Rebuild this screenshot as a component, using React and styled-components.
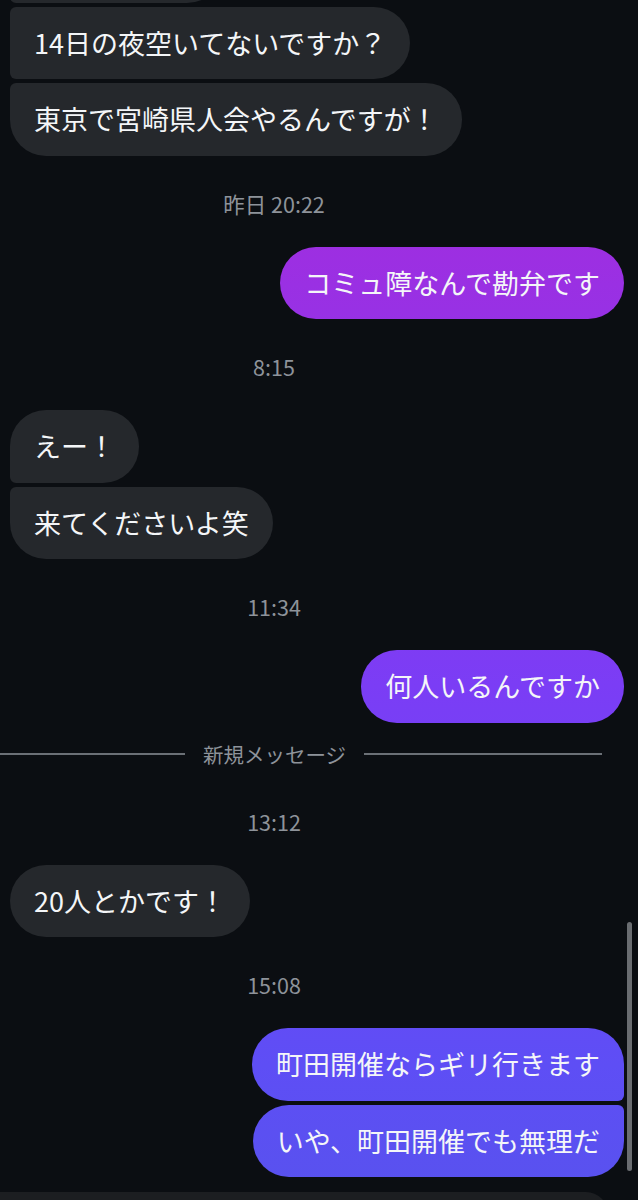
import styled, { createGlobalStyle, css } from 'styled-components';

//Styles
const GlobalStyle = createGlobalStyle`
body {
  margin: 0;
  background: #0b0e12;
  overflow: hidden;
}
`
const Screen = styled.div`
position: relative;
height: 1200px;
overflow: hidden;
display: flex;
flex-direction: column;
background: #0b0e12;
font-family: "Noto Sans CJK JP", "Noto Sans", sans-serif;
`
const Thread = styled.div`
display: flex;
flex-direction: column;
padding: 0 14px 0 10px;
margin-top: -70px;
`
const Group = styled.div`
display: flex;
flex-direction: column;
gap: 4px;
align-items: ${p => (p.$mine ? 'flex-end' : 'flex-start')};
`
const BIG = 36
const SMALL = 6
const corners = (pos) => {
  const top = pos === 'single' || pos === 'first' ? BIG : SMALL
  const bottom = pos === 'single' || pos === 'last' ? BIG : SMALL
  return [top, bottom]
}
const Bubble = styled.div`
box-sizing: border-box;
padding: 18px 24px;
font-size: 27px;
line-height: 36.5px;
color: #f4f6f8;
white-space: nowrap;
${p => p.$w && `width: ${p.$w}px;`}
${p => {
    const [top, bottom] = corners(p.$pos)
    return p.$mine
      ? css`
        border-radius: ${BIG}px ${top}px ${bottom}px ${BIG}px;
        background: linear-gradient(180deg, #b027d6 0px, #9a30e3 284px, #7b3df5 685px, #5e4ef5 1065px, #5852ee 1200px);
        background-attachment: fixed;
      `
      : css`
        border-radius: ${top}px ${BIG}px ${BIG}px ${bottom}px;
        background: #25282c;
      `
  }}
`
const Stamp = styled.div`
margin: 36px 0 31px;
padding-right: 86px;
text-align: center;
font-size: 21.5px;
line-height: 24px;
color: #8e939a;
`
const Divider = styled.div`
display: flex;
align-items: center;
margin: 19px -14px 8px -10px;
padding-right: 36px;
font-size: 20.5px;
line-height: 24px;
color: #8e939a;
`
const Rule = styled.div`
height: 2px;
background: #6b7076;
${p => (p.$fill ? 'flex: 1;' : `width: ${p.$w}px;`)}
`
const DividerLabel = styled.span`
padding: 0 18px;
white-space: nowrap;
`
const Composer = styled.div`
margin-top: 15px;
margin-right: 30px;
height: 64px;
flex-shrink: 0;
background: #1c1e21;
border-radius: 0 22px 0 0;
`
const Scrollbar = styled.div`
position: absolute;
left: 627px;
top: 922px;
width: 5px;
height: 249px;
border-radius: 3px;
background: #6a6d71;
`

// first bubble is scrolled off the top, only its bottom edge shows
const thread = [
  { type: 'group', mine: false, items: [{ text: '\u00a0', w: 213 }, '14日の夜空いてないですか？', '東京で宮崎県人会やるんですが！'] },
  { type: 'stamp', text: '昨日 20:22' },
  { type: 'group', mine: true, items: ['コミュ障なんで勘弁です'] },
  { type: 'stamp', text: '8:15' },
  { type: 'group', mine: false, items: ['えー！', '来てくださいよ笑'] },
  { type: 'stamp', text: '11:34' },
  { type: 'group', mine: true, items: ['何人いるんですか'] },
  { type: 'divider', text: '新規メッセージ' },
  { type: 'stamp', text: '13:12' },
  { type: 'group', mine: false, items: ['20人とかです！'] },
  { type: 'stamp', text: '15:08' },
  { type: 'group', mine: true, items: ['町田開催ならギリ行きます', 'いや、町田開催でも無理だ'] },
]

const position = (i, n) => {
  if (n === 1) return 'single'
  if (i === 0) return 'first'
  if (i === n - 1) return 'last'
  return 'middle'
}

export default function App() {
  return (
    <Screen>
      <GlobalStyle />
      <Thread>
        {thread.map((entry, idx) => {
          if (entry.type === 'stamp') return <Stamp key={idx}>{entry.text}</Stamp>
          if (entry.type === 'divider') {
            return (
              <Divider key={idx}>
                <Rule $w={185} />
                <DividerLabel>{entry.text}</DividerLabel>
                <Rule $fill />
              </Divider>
            )
          }
          return (
            <Group key={idx} $mine={entry.mine}>
              {entry.items.map((item, i) => {
                const msg = typeof item === 'string' ? { text: item } : item
                return (
                  <Bubble key={i} $mine={entry.mine} $w={msg.w} $pos={position(i, entry.items.length)}>
                    {msg.text}
                  </Bubble>
                )
              })}
            </Group>
          )
        })}
      </Thread>
      <Composer />
      <Scrollbar />
    </Screen>
  )
}
